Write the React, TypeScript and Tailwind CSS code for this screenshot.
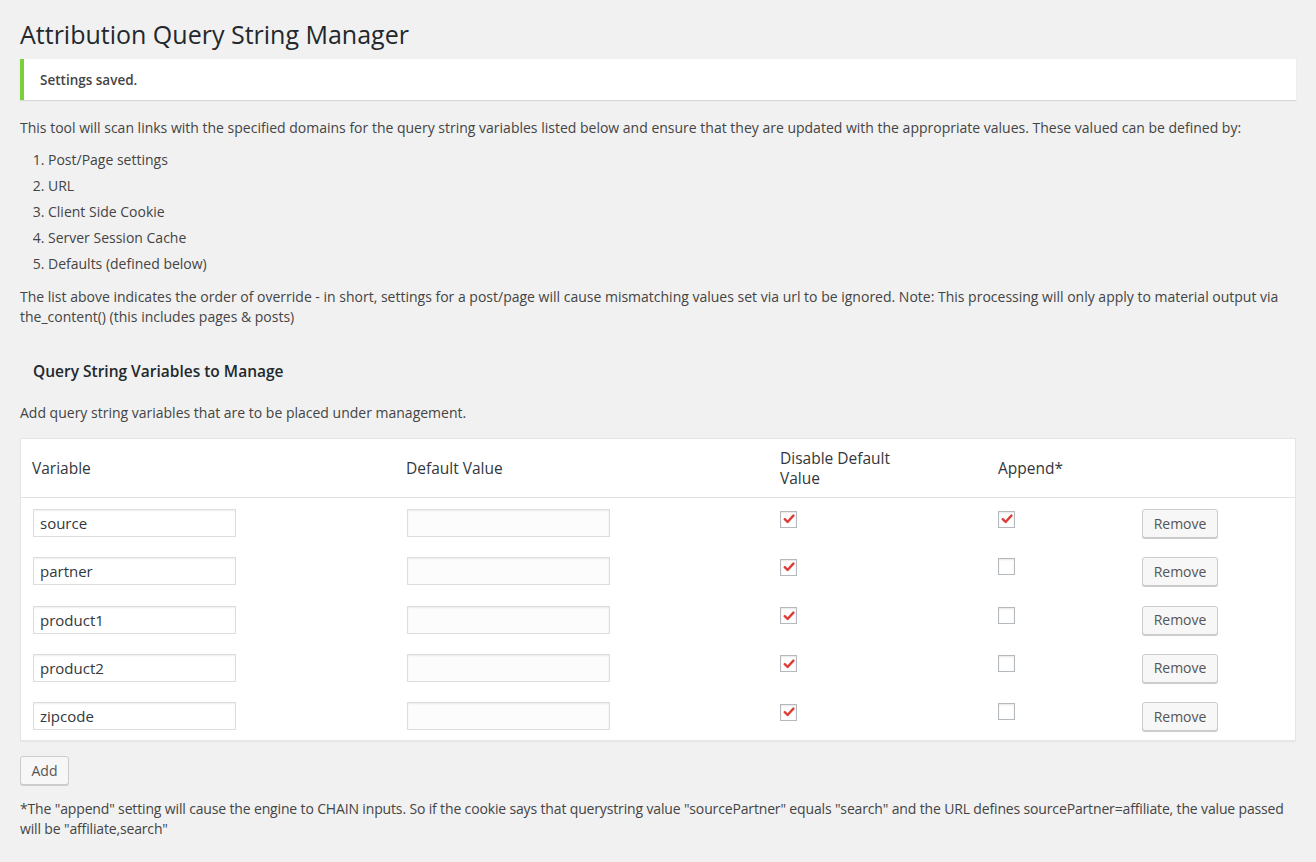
import React from "react";

const rows = [
  { name: "source", append: true },
  { name: "partner", append: false },
  { name: "product1", append: false },
  { name: "product2", append: false },
  { name: "zipcode", append: false },
];

function Check({ checked }: { checked: boolean }) {
  return (
    <span className="inline-flex h-[17px] w-[17px] items-center justify-center border border-[#b4b9be] bg-white shadow-[inset_0_1px_2px_rgba(0,0,0,0.1)]">
      {checked && (
        <svg width="12" height="12" viewBox="0 0 12 12">
          <path d="M1.8 6.2 L4.6 9 L10.4 2.6" fill="none" stroke="#dd3d36" strokeWidth="2.4" strokeLinecap="round" strokeLinejoin="round" />
        </svg>
      )}
    </span>
  );
}

export default function App() {
  return (
    <div
      className="min-h-[862px] bg-[#f1f1f1] px-[20px] pt-[19px] text-[14px] leading-[20px] text-[#444]"
      style={{ fontFamily: '"Open Sans", "Noto Sans", sans-serif' }}
    >
      <h1 className="text-[25px] font-normal leading-[30px] text-[#23282d]">Attribution Query String Manager</h1>
      <div className="mt-[10px] flex h-[41px] items-center border-l-4 border-[#7ad03a] bg-white pl-[16px] shadow-[0_1px_1px_rgba(0,0,0,0.1)]">
        <span className="text-[13.5px] font-semibold text-[#444]">Settings saved.</span>
      </div>
      <p className="mt-[18px]">
        This tool will scan links with the specified domains for the query string variables listed below and ensure that they are updated with the appropriate values. These valued can be defined by:
      </p>
      <ol className="mt-[12px] ml-[28px] list-decimal">
        <li className="mb-[6px]">Post/Page settings</li>
        <li className="mb-[6px]">URL</li>
        <li className="mb-[6px]">Client Side Cookie</li>
        <li className="mb-[6px]">Server Session Cache</li>
        <li className="mb-[6px]">Defaults (defined below)</li>
      </ol>
      <p className="mt-[13px] leading-[20px]">
        The list above indicates the order of override - in short, settings for a post/page will cause mismatching values set via url to be ignored. Note: This processing will only apply to material output via the_content() (this includes pages &amp; posts)
      </p>
      <h3 className="mt-[34px] pl-[13px] text-[15.5px] font-semibold leading-[20px] text-[#23282d]">Query String Variables to Manage</h3>
      <p className="mt-[22px]">Add query string variables that are to be placed under management.</p>
      <div className="mt-[15px] border border-[#e5e5e5] bg-white shadow-[0_1px_1px_rgba(0,0,0,0.04)]">
        <div className="flex h-[59px] items-center border-b border-[#e1e1e1] text-[15.5px] leading-[20px] text-[#32373c]">
          <div className="w-[374px] pl-[11px]">Variable</div>
          <div className="w-[374px] pl-[11px]">Default Value</div>
          <div className="w-[218px] pl-[11px]">
            Disable Default
            <br />
            Value
          </div>
          <div className="w-[144px] pl-[11px]">Append*</div>
          <div className="flex-1" />
        </div>
        <div className="flex flex-col gap-[20.3px] pt-[11px] pb-[10px]">
          {rows.map((r) => (
            <div key={r.name} className="flex h-[28px] items-start">
              <div className="w-[374px] pl-[12px]">
                <div className="flex h-[28px] w-[203px] items-center border border-[#ddd] bg-white pl-[6px] text-[15px] text-[#32373c] shadow-[inset_0_1px_2px_rgba(0,0,0,0.07)]">
                  {r.name}
                </div>
              </div>
              <div className="w-[374px] pl-[12px]">
                <div className="h-[28px] w-[203px] border border-[#ddd] bg-[#fcfcfc] shadow-[inset_0_1px_2px_rgba(0,0,0,0.07)]" />
              </div>
              <div className="w-[218px] pl-[11px] pt-[1px]">
                <Check checked={true} />
              </div>
              <div className="w-[144px] pl-[11px] pt-[1px]">
                <Check checked={r.append} />
              </div>
              <div className="flex-1 pl-[11px]">
                <div className="flex h-[29px] w-[76px] items-center justify-center rounded-[3px] border border-[#ccc] bg-[#f7f7f7] text-[14px] text-[#555] shadow-[0_1px_0_#ccc]">
                  Remove
                </div>
              </div>
            </div>
          ))}
        </div>
      </div>
      <div className="mt-[15px] flex h-[29px] w-[49px] items-center justify-center rounded-[3px] border border-[#ccc] bg-[#f7f7f7] text-[14px] text-[#555] shadow-[0_1px_0_#ccc]">
        Add
      </div>
      <p className="mt-[14px] leading-[20px] tracking-[-0.15px]">
        *The "append" setting will cause the engine to CHAIN inputs. So if the cookie says that querystring value "sourcePartner" equals "search" and the URL defines sourcePartner=affiliate, the value passed will be "affiliate,search"
      </p>
    </div>
  );
}
